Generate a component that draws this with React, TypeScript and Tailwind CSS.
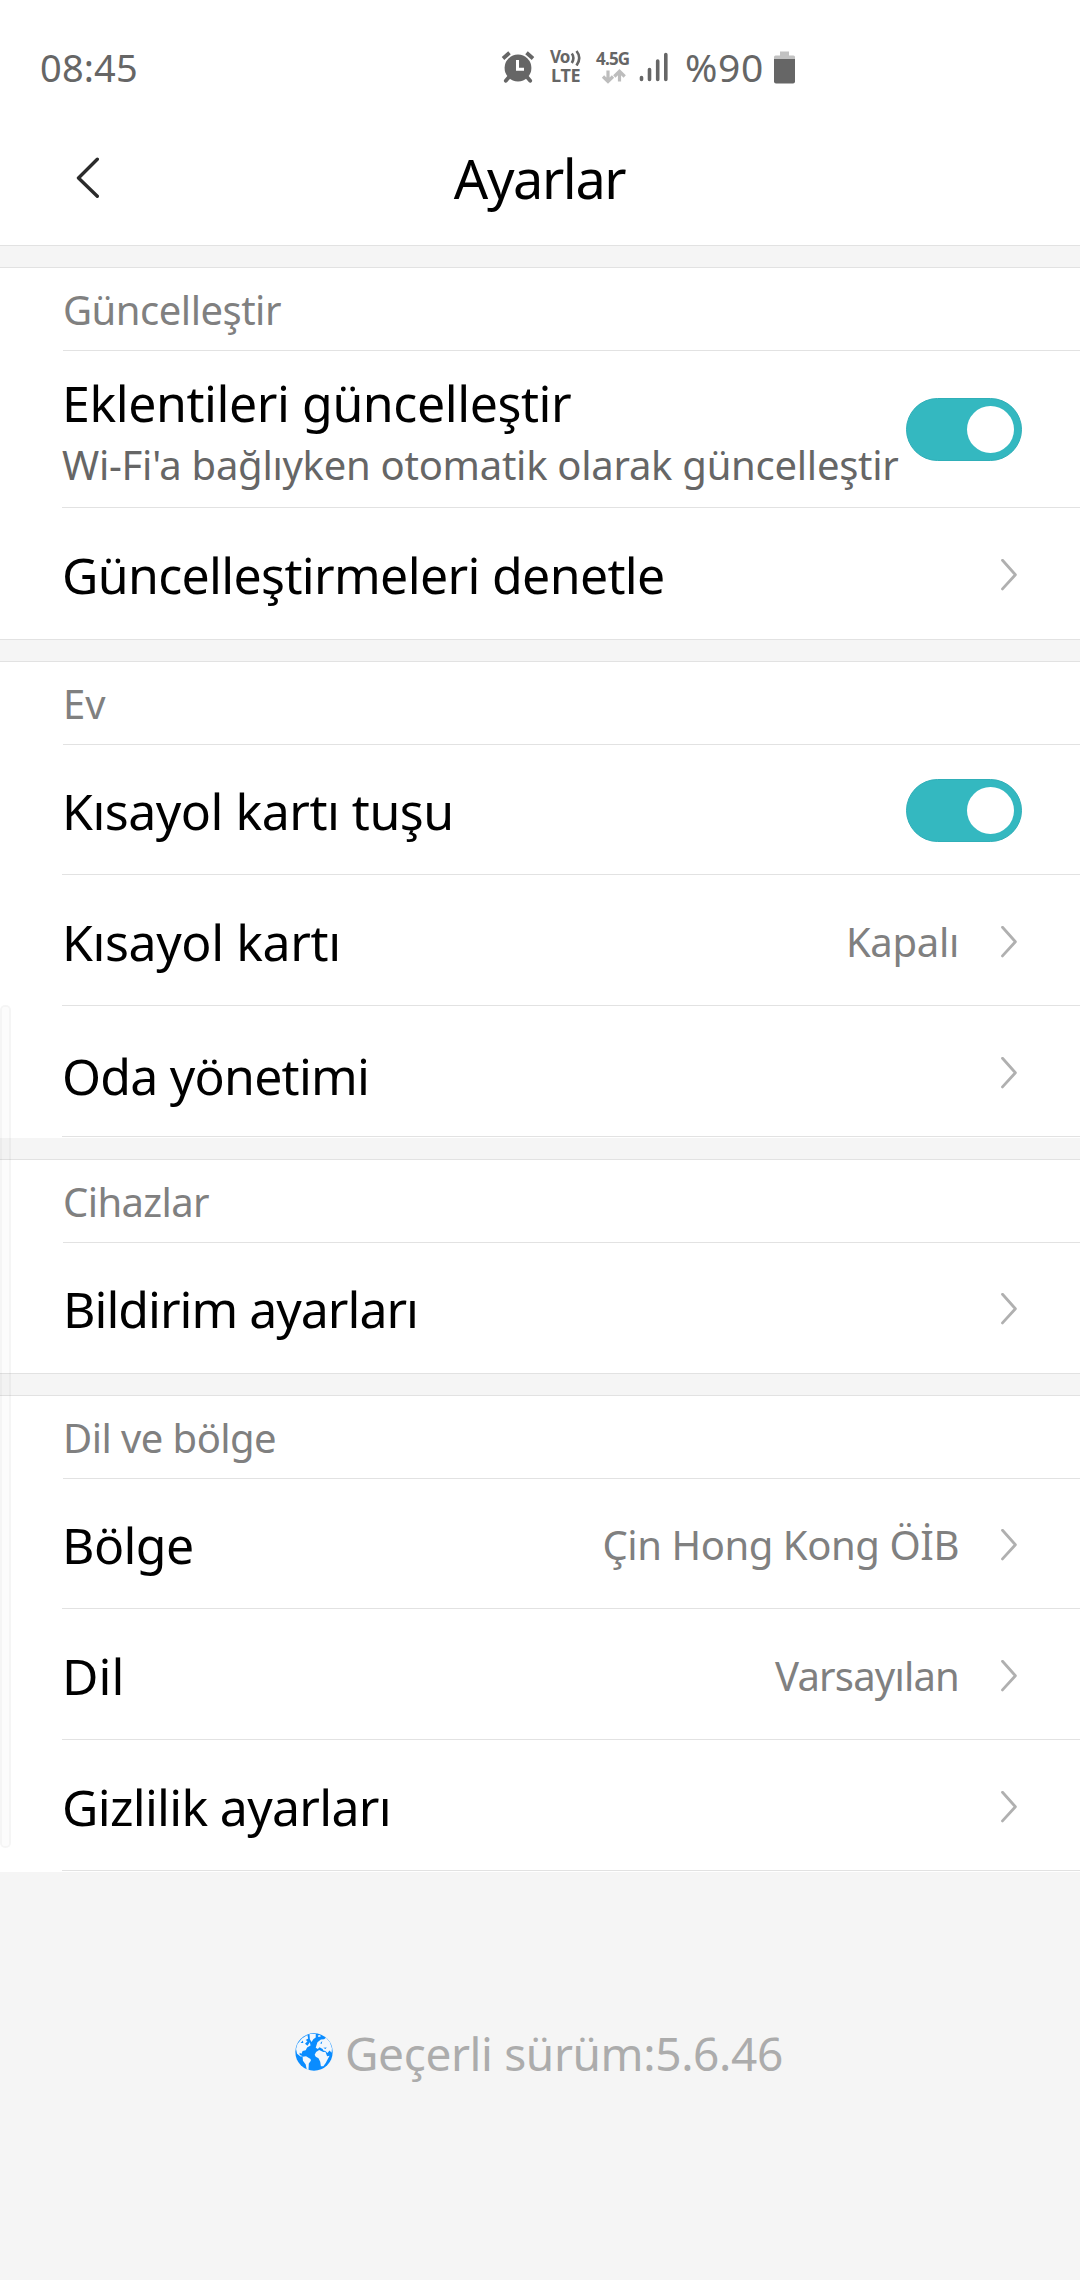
import type { ReactNode } from "react";

interface SettingRowProps {
  label: string;
  labelClass?: string;
  className?: string;
  children?: ReactNode;
}

const Chevron = () => (
  <svg className="h-[32px] w-[16px] shrink-0" viewBox="0 0 16 32" fill="none">
    <path d="M1.5 1.3 L14.4 15.7 L1.5 29.900" stroke="#b0b0b0" strokeWidth="2.8" strokeLinecap="round" strokeLinejoin="round" />
  </svg>
);

const Toggle = () => (
  <button
    role="switch"
    aria-checked="true"
    className="-mr-[5px] flex h-[63px] w-[116px] shrink-0 items-center justify-end rounded-full border border-[#2fafb8] bg-[#34b8c0] pr-[7px]"
  >
    <span className="h-[47px] w-[47px] rounded-full bg-white" />
  </button>
);

const StatusBar = () => (
  <div className="flex h-[110px] items-center pt-[24px] text-[38px] text-[#666]">
    <span className="w-[461px] pl-[40px] tracking-[0.15px]">08:45</span>
    {/* alarm */}
    <svg className="ml-[40px] h-[32px] w-[34px] shrink-0" viewBox="0 0 34 32" fill="none">
      <circle cx="17" cy="17" r="13.4" fill="#666" />
      <path d="M2 7.5 L8.5 1.8 M32 7.5 L25.5 1.8" stroke="#666" strokeWidth="3.8" />
      <path d="M8 26 L4.8 29.800 M26 26 L29.200 29.800" stroke="#666" strokeWidth="3.8" strokeLinecap="round" />
      <path d="M16.5 9 V18.2 H23" stroke="#fff" strokeWidth="3" />
    </svg>
    {/* VoLTE */}
    <div className="-mt-[2px] ml-[15px] flex w-[33px] shrink-0 flex-col font-bold">
      <div className="flex h-[18px] items-center">
        <div className="w-[20px] text-[17px] leading-[18px] tracking-[-0.9px]">Vo</div>
        <svg className="h-[18px] w-[13px] shrink-0" viewBox="0 0 13 18" fill="none" stroke="#666" strokeWidth="2.6">
          <path d="M1.8 5.500 Q5 9.8 1.8 15 M6.500 3 Q12 9.8 6.500 17.500" />
        </svg>
      </div>
      <div className="pl-px text-[18px] leading-[18px] tracking-[-0.3px]">LTE</div>
    </div>
    {/* mobile data */}
    <div className="ml-[13px] flex w-[37px] shrink-0 flex-col font-bold">
      <div className="text-[17px] leading-[18px] tracking-[-0.8px]">4.5G</div>
      <svg className="ml-[5px] h-[16px] w-[26px]" viewBox="0 0 26 16" fill="none" stroke="#bdbdbd" strokeWidth="3.2">
        <path d="M7 2.500 V13 M2 8.5 L7 13.500 L12 8.5" />
        <path d="M18.5 13.500 V3.500 M13.3 8.500 L18.5 3.300 L23.7 8.500" />
      </svg>
    </div>
    {/* signal */}
    <svg className="ml-[6px] h-[32px] w-[29px] shrink-0" viewBox="0 0 29 32" stroke="#666" strokeWidth="3.6" strokeLinecap="round">
      <path d="M2.5 26.5 V28.5 M10.5 18.5 V28.5 M18.7 10 V28.5 M26.8 3.5 V28.5" />
    </svg>
    <span className="ml-[17px] w-[78px] text-[39px] tracking-[0.7px]">%90</span>
    {/* battery */}
    <svg className="ml-[11px] h-[34px] w-[21px] shrink-0" viewBox="0 0 21 34">
      <path d="M6 1.5 h9 v4 h4.5 q1.5 0 1.5 1.5 v3 h-21 v-3 q0-1.5 1.5-1.5 h4.5 z" fill="#c2c2c2" />
      <path d="M0 9 h21 v22.500 q0 2-2 2 h-17 q-2 0-2-2 z" fill="#666" />
    </svg>
  </div>
);

const Gap = ({ className = "border-t-[#e2e2e2]" }: { className?: string }) => (
  <div className={`h-[23px] border-y border-b-[#e2e2e2] bg-[#f5f5f5] ${className}`} />
);

const SectionTitle = ({ children, className = "" }: { children: ReactNode; className?: string }) => (
  <h2 className={`ml-[63px] flex h-[83px] items-center border-b border-[#e2e2e2] pt-[2px] text-[40px] text-[#808080] ${className}`}>
    {children}
  </h2>
);

const SettingRow = ({ label, labelClass = "", className = "h-[131px] border-b pt-[3px]", children }: SettingRowProps) => (
  <div className={`ml-[62px] flex items-center border-[#e2e2e2] pr-[63px] ${className}`}>
    <span className={`flex-1 text-[50px] text-black ${labelClass}`}>{label}</span>
    {children}
  </div>
);

const Value = ({ children, className = "" }: { children: ReactNode; className?: string }) => (
  <span className={`mr-[42px] text-[40px] text-[#808080] ${className}`}>{children}</span>
);

const Globe = () => (
  <svg className="-mt-[3px] h-[38px] w-[38px]" viewBox="0 0 110 110">
    <circle cx="55" cy="55" r="54" fill="#0a8cff" />
    <g fill="#f2f7fc">
      <path d="M3 46 L7 32 L20 16 L36 6 L38 16 L31 20 L36 24 L29 31 L36 37 L43 27 L45 36 L35 42 L31 50 L22 52 L19 60 L13 57 L14 64 L23 67 L16 68 L6 60 Z" />
      <path d="M42 3 L60 3 L60 13 L53 18 L48 26 L43 18 Z" />
      <path d="M22 69 L32 67 L45 75 L46 80 L40 88 L39 107 L34 106 L31 91 L23 80 Z" />
      <path d="M66 7 L73 6 L74 11 L67 11 Z" />
      <path d="M62 36 L65 27 L75 19 L84 18 L90 14 L101 27 L107 44 L106 57 L100 51 L94 58 L88 52 L82 51 L80 46 L71 41 L66 46 L60 43 Z" />
      <path d="M61 55 L70 49 L82 55 L88 54 L93 67 L100 66 L93 79 L89 87 L82 96 L75 96 L73 83 L68 73 L60 69 L57 63 Z" />
    </g>
    <path d="M16 29 L23 22 L24 29 Z M73 30 L79 23 L77 32 Z M82 43 L92 42 L88 46 Z M70 43 L77 49 L72 46 Z" fill="#0a8cff" />
  </svg>
);

const App = () => {
  return (
    <div className="relative flex h-[2280px] w-[1080px] flex-col overflow-hidden whitespace-nowrap bg-[#f5f5f5] font-['Noto_Sans',sans-serif] leading-[60px]">
      <header className="bg-white">
        <StatusBar />
        <div className="grid h-[135px] grid-cols-3 items-center">
          <svg className="ml-[76px] h-[42px] w-[24px]" viewBox="0 0 24 42" fill="none">
            <path d="M21.300 2.300 L2.500 21 L21.300 39.200" stroke="#2b2b2b" strokeWidth="3.400" strokeLinecap="round" strokeLinejoin="round" />
          </svg>
          <h1 className="pt-px pr-px text-center text-[54px] tracking-[-1.4px] text-black">Ayarlar</h1>
        </div>
      </header>

      <Gap />
      <section className="bg-white">
        <SectionTitle className="tracking-[-0.5px]">Güncelleştir</SectionTitle>
        <div className="ml-[62px] flex h-[157px] items-center border-b border-[#e2e2e2] pr-[63px]">
          <div className="flex flex-1 flex-col self-start pt-[22px]">
            <span className="text-[50px] tracking-[-0.42px] text-black">Eklentileri güncelleştir</span>
            <span className="w-0 text-[40px] leading-[64px] tracking-[-0.27px] text-[#666]">
              Wi-Fi'a bağlıyken otomatik olarak güncelleştir
            </span>
          </div>
          <Toggle />
        </div>
        <SettingRow label="Güncelleştirmeleri denetle" labelClass="tracking-[-0.66px]" className="h-[131px] pt-[2px]">
          <Chevron />
        </SettingRow>
      </section>

      <Gap />
      <section className="bg-white">
        <SectionTitle>Ev</SectionTitle>
        <SettingRow label="Kısayol kartı tuşu" labelClass="tracking-[-0.5px]" className="h-[130px] border-b pt-[2px]">
          <Toggle />
        </SettingRow>
        <SettingRow label="Kısayol kartı" labelClass="tracking-[-0.4px]">
          <Value className="tracking-[-0.3px]">Kapalı</Value>
          <Chevron />
        </SettingRow>
        <SettingRow label="Oda yönetimi" labelClass="pt-[6px] tracking-[-0.76px]">
          <Chevron />
        </SettingRow>
      </section>

      <Gap className="border-t-white" />
      <section className="bg-white">
        <SectionTitle className="tracking-[-0.6px]">Cihazlar</SectionTitle>
        <SettingRow label="Bildirim ayarları" labelClass="pl-px tracking-[-1px]" className="h-[130px] pt-[2px]">
          <Chevron />
        </SettingRow>
      </section>

      <Gap />
      <section className="border-b border-white bg-white">
        <SectionTitle className="tracking-[-0.56px]">Dil ve bölge</SectionTitle>
        <SettingRow label="Bölge" labelClass="tracking-[-0.6px]" className="h-[130px] border-b pt-[2px]">
          <Value className="tracking-[-0.42px]">Çin Hong Kong ÖİB</Value>
          <Chevron />
        </SettingRow>
        <SettingRow label="Dil">
          <Value className="tracking-[-0.8px]">Varsayılan</Value>
          <Chevron />
        </SettingRow>
        <SettingRow label="Gizlilik ayarları" labelClass="tracking-[-0.7px]">
          <Chevron />
        </SettingRow>
      </section>

      <footer className="flex items-center pl-[295px] pt-[151px]">
        <Globe />
        <span className="ml-[12px] text-[46px] tracking-[-0.37px] text-[#acacac]">Geçerli sürüm:5.6.46</span>
      </footer>

      {/* edge panel handle */}
      <div className="absolute left-0 top-[1005px] h-[843px] w-[11px] rounded-[5px] border-2 border-black/[0.03] bg-black/[0.01]" />
    </div>
  );
};

export default App;
